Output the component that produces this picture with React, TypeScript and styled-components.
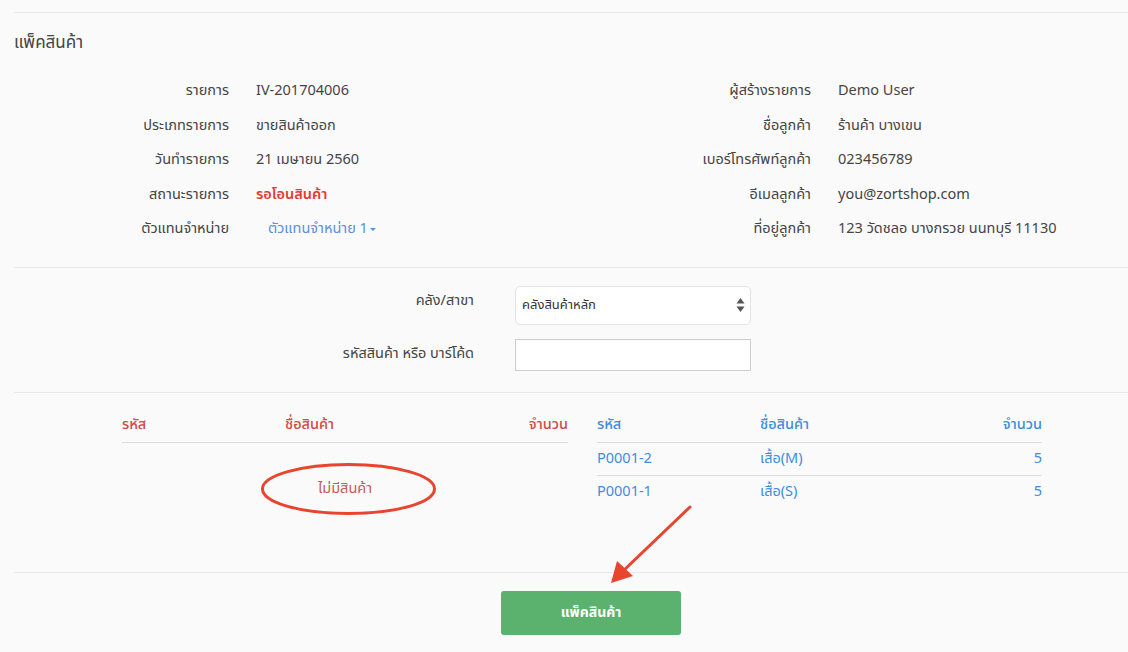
import React from "react";
import styled, { createGlobalStyle } from "styled-components";

const Global = createGlobalStyle`
  html, body { margin: 0; padding: 0; background: #fafafa; }
  body {
    font-family: "Noto Sans Thai", "Thonburi", "Tahoma", "Noto Sans", "Liberation Sans", sans-serif;
    color: #444;
    font-size: 14.5px;
  }
  * { box-sizing: border-box; }
`;

const Page = styled.div`
  position: relative;
  width: 1128px;
  height: 652px;
  padding: 12px 0 0 14px;
  overflow: hidden;
`;

const Section = styled.div<{ $pt?: number; $pb?: number; $h?: number }>`
  border-top: 1px solid #e8e8e8;
  padding-top: ${(p) => p.$pt ?? 0}px;
  padding-bottom: ${(p) => p.$pb ?? 0}px;
  ${(p) => (p.$h ? `height: ${p.$h}px;` : "")}
`;

const Title = styled.h1`
  margin: 0 0 19px;
  font-size: 17px;
  font-weight: 400;
  line-height: 24px;
  color: #444;
`;

const InfoGrid = styled.div`
  display: grid;
  grid-template-columns: 582px 1fr;
`;

const InfoColumn = styled.div`
  display: grid;
  grid-template-columns: 215px 1fr;
  column-gap: 27px;
  grid-auto-rows: 34.5px;
  align-items: center;
`;

const Label = styled.div`
  text-align: right;
  color: #444;
  white-space: nowrap;
`;

const Value = styled.div<{ $tone?: "red" | "link" }>`
  white-space: nowrap;
  color: ${(p) => (p.$tone === "red" ? "#e8392f" : p.$tone === "link" ? "#5a8fdb" : "#444")};
  font-weight: ${(p) => (p.$tone === "red" ? 600 : 400)};
  padding-left: ${(p) => (p.$tone === "link" ? 12 : 0)}px;
`;

const Caret = styled.span`
  display: inline-block;
  margin-left: 2px;
  vertical-align: middle;
  border-top: 3px solid #5a8fdb;
  border-left: 3px solid transparent;
  border-right: 3px solid transparent;
`;

const FormGrid = styled.div`
  display: grid;
  grid-template-columns: 460px 236px;
  column-gap: 41px;
  row-gap: 14px;
  align-items: center;
`;

const FormLabel = styled.label`
  text-align: right;
  color: #444;
  white-space: nowrap;
  align-self: start;
  padding-top: 4px;
`;

const SelectBox = styled.div`
  position: relative;
  height: 39px;
  background: #fff;
  border: 1px solid #e3e3e3;
  border-radius: 5px;
  display: flex;
  align-items: center;
  padding: 0 6px;
  font-size: 13px;
  color: #333;
`;

const SelectArrows = styled.svg`
  position: absolute;
  right: 5px;
  top: 50%;
  transform: translateY(-50%);
`;

const TextInput = styled.input`
  height: 32px;
  width: 100%;
  background: #fff;
  border: 1px solid #cdcdcd;
  border-radius: 0;
  outline: none;
`;

const Tables = styled.div`
  display: flex;
  gap: 29px;
  padding-left: 108px;
`;

const Table = styled.div<{ $w: number; $tone: "red" | "blue" }>`
  width: ${(p) => p.$w}px;
  color: ${(p) => (p.$tone === "red" ? "#cf4b45" : "#3d8de0")};
`;

const Row = styled.div<{ $head?: boolean; $line?: boolean }>`
  display: grid;
  grid-template-columns: 163px 1fr 80px;
  align-items: center;
  height: ${(p) => (p.$head ? 35 : 33)}px;
  border-bottom: ${(p) => (p.$line ? "1px solid #dcdcdc" : "none")};
  font-weight: ${(p) => (p.$head ? 500 : 400)};
`;

const Cell = styled.div<{ $align?: "right" | "left" }>`
  text-align: ${(p) => p.$align ?? "left"};
  white-space: nowrap;
`;

const Empty = styled.div`
  text-align: center;
  color: #c45a55;
  padding-top: 30px;
  line-height: 32px;
`;

const EmptyText = styled.span`
  position: relative;
  display: inline-block;
`;

const Ellipse = styled.svg`
  position: absolute;
  left: 50%;
  top: 50%;
  transform: translate(-48%, -50%);
  overflow: visible;
  pointer-events: none;
`;

const Footer = styled.div`
  display: flex;
  padding-left: 487px;
`;

const Button = styled.button`
  width: 180px;
  height: 44px;
  background: #5bb26e;
  border: none;
  border-radius: 3px;
  color: #fff;
  font-family: inherit;
  font-size: 14px;
  font-weight: 700;
`;

const Arrow = styled.svg`
  position: absolute;
  left: 0;
  top: 0;
  pointer-events: none;
`;

export default function App() {
  return (
    <Page>
      <Global />
      <Section $pt={18} $pb={20}>
        <Title>แพ็คสินค้า</Title>
        <InfoGrid>
          <InfoColumn>
            <Label>รายการ</Label>
            <Value>IV-201704006</Value>
            <Label>ประเภทรายการ</Label>
            <Value>ขายสินค้าออก</Value>
            <Label>วันทำรายการ</Label>
            <Value>21 เมษายน 2560</Value>
            <Label>สถานะรายการ</Label>
            <Value $tone="red">รอโอนสินค้า</Value>
            <Label>ตัวแทนจำหน่าย</Label>
            <Value $tone="link">
              ตัวแทนจำหน่าย 1<Caret />
            </Value>
          </InfoColumn>
          <InfoColumn>
            <Label>ผู้สร้างรายการ</Label>
            <Value>Demo User</Value>
            <Label>ชื่อลูกค้า</Label>
            <Value>ร้านค้า บางเขน</Value>
            <Label>เบอร์โทรศัพท์ลูกค้า</Label>
            <Value>023456789</Value>
            <Label>อีเมลลูกค้า</Label>
            <Value>you@zortshop.com</Value>
            <Label>ที่อยู่ลูกค้า</Label>
            <Value>123 วัดชลอ บางกรวย นนทบุรี 11130</Value>
          </InfoColumn>
        </InfoGrid>
      </Section>
      <Section $pt={18} $pb={21}>
        <FormGrid>
          <FormLabel>คลัง/สาขา</FormLabel>
          <SelectBox>
            คลังสินค้าหลัก
            <SelectArrows width="9" height="16" viewBox="0 0 9 16">
              <path d="M4.5 1 L8.5 6.5 L0.5 6.5 Z" fill="#555" />
              <path d="M4.5 15 L8.5 9.5 L0.5 9.5 Z" fill="#555" />
            </SelectArrows>
          </SelectBox>
          <FormLabel>รหัสสินค้า หรือ บาร์โค้ด</FormLabel>
          <TextInput />
        </FormGrid>
      </Section>
      <Section $pt={15} $h={180}>
        <Tables>
          <Table $w={446} $tone="red">
            <Row $head $line>
              <Cell>รหัส</Cell>
              <Cell>ชื่อสินค้า</Cell>
              <Cell $align="right">จำนวน</Cell>
            </Row>
            <Empty>
              <EmptyText>
                ไม่มีสินค้า
                <Ellipse width="174" height="52" viewBox="0 0 174 52">
                  <ellipse cx="87" cy="26" rx="86" ry="24.5" fill="none" stroke="#e8442e" strokeWidth="3" />
                </Ellipse>
              </EmptyText>
            </Empty>
          </Table>
          <Table $w={445} $tone="blue">
            <Row $head $line>
              <Cell>รหัส</Cell>
              <Cell>ชื่อสินค้า</Cell>
              <Cell $align="right">จำนวน</Cell>
            </Row>
            <Row $line>
              <Cell>P0001-2</Cell>
              <Cell>เสื้อ(M)</Cell>
              <Cell $align="right">5</Cell>
            </Row>
            <Row>
              <Cell>P0001-1</Cell>
              <Cell>เสื้อ(S)</Cell>
              <Cell $align="right">5</Cell>
            </Row>
          </Table>
        </Tables>
      </Section>
      <Section $pt={18}>
        <Footer>
          <Button>แพ็คสินค้า</Button>
        </Footer>
      </Section>
      <Arrow width="1128" height="652" viewBox="0 0 1128 652">
        <line x1="690" y1="507" x2="622" y2="572" stroke="#e8442e" strokeWidth="3" strokeLinecap="round" />
        <path d="M611 583 L617 561 L633 576 Z" fill="#e8442e" />
      </Arrow>
    </Page>
  );
}
